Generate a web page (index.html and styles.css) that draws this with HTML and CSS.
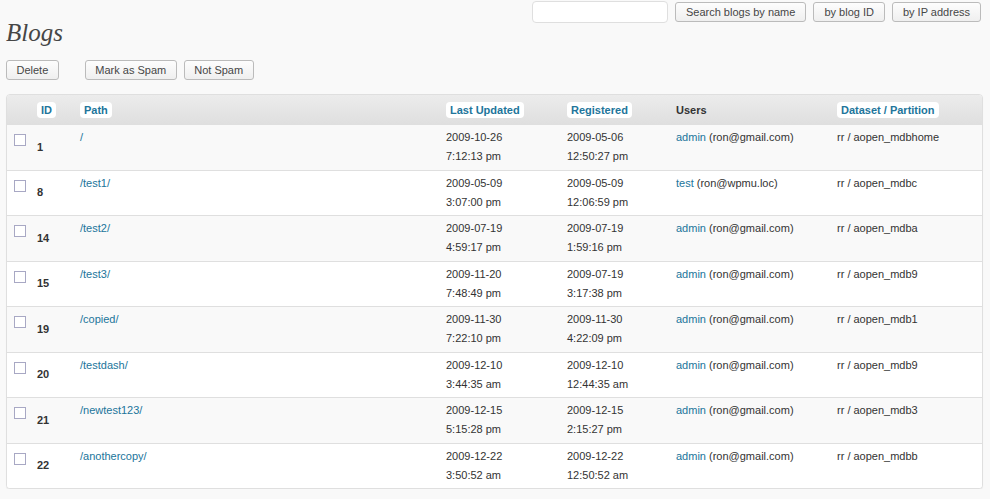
FILE: index.html
```html
<!DOCTYPE html>
<html>
<head>
<meta charset="utf-8">
<link rel="stylesheet" href="styles.css">
</head>
<body>
<div class="wrap">
  <form class="search">
    <input class="search-input" type="text">
    <button class="btn" type="button">Search blogs by name</button>
    <button class="btn" type="button">by blog ID</button>
    <button class="btn" type="button">by IP address</button>
  </form>
  <h2 class="title">Blogs</h2>
  <div class="actions">
    <button class="btn" type="button">Delete</button>
    <span class="sep"></span>
    <button class="btn" type="button">Mark as Spam</button>
    <button class="btn" type="button">Not Spam</button>
  </div>
  <div class="table-box">
    <table class="blogs">
      <colgroup>
        <col class="c-cb"><col class="c-id"><col class="c-path"><col class="c-upd"><col class="c-reg"><col class="c-users"><col class="c-ds">
      </colgroup>
      <thead>
        <tr>
          <th></th>
          <th><a class="pill">ID</a></th>
          <th><a class="pill">Path</a></th>
          <th><a class="pill">Last Updated</a></th>
          <th><a class="pill">Registered</a></th>
          <th><span class="plain">Users</span></th>
          <th><a class="pill">Dataset / Partition</a></th>
        </tr>
      </thead>
      <tbody>
        <tr class="alt">
          <td><input class="cb" type="checkbox"></td>
          <td class="id">1</td>
          <td><a class="link">/</a></td>
          <td>2009-10-26<br>7:12:13 pm</td>
          <td>2009-05-06<br>12:50:27 pm</td>
          <td><a class="link">admin</a> (ron@gmail.com)</td>
          <td>rr / aopen_mdbhome</td>
        </tr>
        <tr>
          <td><input class="cb" type="checkbox"></td>
          <td class="id">8</td>
          <td><a class="link">/test1/</a></td>
          <td>2009-05-09<br>3:07:00 pm</td>
          <td>2009-05-09<br>12:06:59 pm</td>
          <td><a class="link">test</a> (ron@wpmu.loc)</td>
          <td>rr / aopen_mdbc</td>
        </tr>
        <tr class="alt">
          <td><input class="cb" type="checkbox"></td>
          <td class="id">14</td>
          <td><a class="link">/test2/</a></td>
          <td>2009-07-19<br>4:59:17 pm</td>
          <td>2009-07-19<br>1:59:16 pm</td>
          <td><a class="link">admin</a> (ron@gmail.com)</td>
          <td>rr / aopen_mdba</td>
        </tr>
        <tr>
          <td><input class="cb" type="checkbox"></td>
          <td class="id">15</td>
          <td><a class="link">/test3/</a></td>
          <td>2009-11-20<br>7:48:49 pm</td>
          <td>2009-07-19<br>3:17:38 pm</td>
          <td><a class="link">admin</a> (ron@gmail.com)</td>
          <td>rr / aopen_mdb9</td>
        </tr>
        <tr class="alt">
          <td><input class="cb" type="checkbox"></td>
          <td class="id">19</td>
          <td><a class="link">/copied/</a></td>
          <td>2009-11-30<br>7:22:10 pm</td>
          <td>2009-11-30<br>4:22:09 pm</td>
          <td><a class="link">admin</a> (ron@gmail.com)</td>
          <td>rr / aopen_mdb1</td>
        </tr>
        <tr>
          <td><input class="cb" type="checkbox"></td>
          <td class="id">20</td>
          <td><a class="link">/testdash/</a></td>
          <td>2009-12-10<br>3:44:35 am</td>
          <td>2009-12-10<br>12:44:35 am</td>
          <td><a class="link">admin</a> (ron@gmail.com)</td>
          <td>rr / aopen_mdb9</td>
        </tr>
        <tr class="alt">
          <td><input class="cb" type="checkbox"></td>
          <td class="id">21</td>
          <td><a class="link">/newtest123/</a></td>
          <td>2009-12-15<br>5:15:28 pm</td>
          <td>2009-12-15<br>2:15:27 pm</td>
          <td><a class="link">admin</a> (ron@gmail.com)</td>
          <td>rr / aopen_mdb3</td>
        </tr>
        <tr>
          <td><input class="cb" type="checkbox"></td>
          <td class="id">22</td>
          <td><a class="link">/anothercopy/</a></td>
          <td>2009-12-22<br>3:50:52 am</td>
          <td>2009-12-22<br>12:50:52 am</td>
          <td><a class="link">admin</a> (ron@gmail.com)</td>
          <td>rr / aopen_mdbb</td>
        </tr>
      </tbody>
    </table>
  </div>
</div>
</body>
</html>
```
FILE: styles.css
```css
html, body {
  margin: 0;
  padding: 0;
  background: #f9f9f9;
}
body {
  font-family: "Liberation Sans", Arial, sans-serif;
  font-size: 11px;
  color: #333;
}
.wrap {
  padding: 0 7px 0 6px;
}
.search {
  float: right;
  display: flex;
  align-items: flex-start;
  gap: 7px;
  padding-top: 1px;
  padding-right: 2px;
  margin: 0;
}
.search-input {
  box-sizing: border-box;
  width: 136px;
  height: 22px;
  border: 1px solid #dfdfdf;
  border-radius: 4px;
  background: #fff;
  margin: 0;
  outline: none;
}
.btn {
  box-sizing: border-box;
  height: 20px;
  margin: 0;
  padding: 0 10px;
  font-family: "Liberation Sans", Arial, sans-serif;
  font-size: 11px;
  color: #464646;
  background: linear-gradient(#fdfdfd, #efefef);
  border: 1px solid #bbb;
  border-radius: 3px;
  line-height: 18px;
}
.search .btn {
  margin-top: 1px;
}
.title {
  margin: 0;
  padding: 15px 0 0 0;
  height: 35px;
  font-family: "Liberation Serif", Georgia, serif;
  font-style: italic;
  font-weight: normal;
  font-size: 25px;
  line-height: 36px;
  color: #464646;
}
.actions {
  clear: both;
  display: flex;
  gap: 7px;
  height: 20px;
  margin-top: 10px;
}
.actions .sep {
  width: 12px;
}
.actions .btn {
  padding: 0 9.5px;
}
.table-box {
  margin-top: 14px;
  border: 1px solid #dfdfdf;
  border-radius: 4px;
  overflow: hidden;
  background: #fff;
  box-shadow: 0 1px 1px rgba(0, 0, 0, 0.06);
}
.blogs {
  width: 100%;
  border-collapse: collapse;
  table-layout: fixed;
}
.c-cb { width: 23px; }
.c-id { width: 43px; }
.c-path { width: 366px; }
.c-upd { width: 121px; }
.c-reg { width: 109px; }
.c-users { width: 161px; }
.c-ds { width: auto; }
.blogs thead th {
  height: 29px;
  padding: 0 0 0 7px;
  text-align: left;
  background: linear-gradient(#ececec, #dfdfdf);
  font-weight: bold;
  font-size: 11px;
  vertical-align: middle;
}
.pill {
  display: inline-block;
  padding: 0 4px;
  height: 16px;
  line-height: 16px;
  background: #fff;
  border-radius: 4px;
  color: #21759b;
}
.plain {
  color: #333;
}
.blogs tbody td {
  padding: 3px 0 3.5px 7px;
  line-height: 19px;
  vertical-align: top;
  border-top: 1px solid #dfdfdf;
  background: #fff;
  white-space: nowrap;
}
.blogs tbody tr.alt td {
  background: #f9f9f9;
}
.blogs tbody td.id {
  vertical-align: middle;
  font-weight: bold;
}
.link {
  color: #21759b;
  text-decoration: none;
}
.cb {
  appearance: none;
  -webkit-appearance: none;
  box-sizing: border-box;
  width: 12px;
  height: 12px;
  margin: 6px 0 0 0;
  border: 1px solid #a8a8c4;
  background: #fff;
  display: block;
}
```
